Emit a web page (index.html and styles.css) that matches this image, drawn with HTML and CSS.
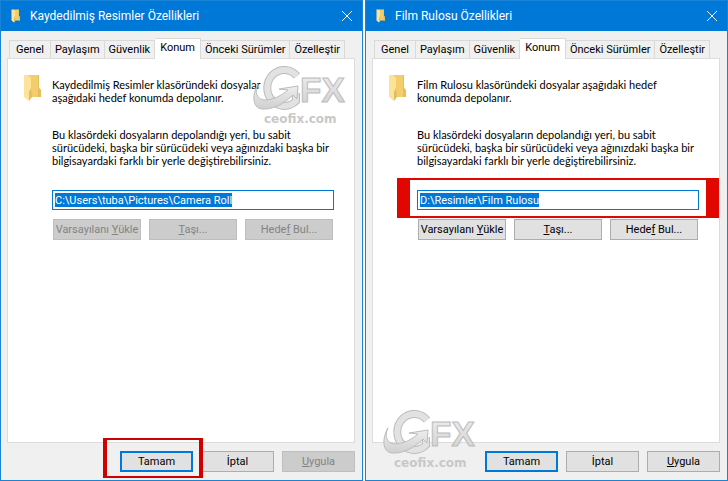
FILE: index.html
```
<!DOCTYPE html>
<html lang="tr">

<head>
  <meta charset="UTF-8" />
  <meta name="viewport" content="width=device-width, initial-scale=1.0" />
  <title>Klasör Özellikleri</title>
  <link rel="stylesheet" href="styles.css">
</head>

<body>
  <svg class="symbols" aria-hidden="true">
    <defs>
      <linearGradient id="silver" x1="0" y1="0" x2="0" y2="1">
        <stop offset="0" stop-color="#f0f0f0" />
        <stop offset="1" stop-color="#cfcfcf" />
      </linearGradient>
    </defs>
    <symbol id="folder" viewBox="0 0 20 28">
      <path d="M5 1h11v13l2 2v7H5z" fill="#f3cc6c" />
      <path d="M15 1h1v13l2 2v7h-3z" fill="#e9bd58" />
      <path d="M1 1h4l3 3v19l-2 4-5-4z" fill="#fde29a" />
      <path d="M8 14l1 9-3 4V18z" fill="#e3bd62" />
    </symbol>
    <symbol id="logo" viewBox="0 0 94 60">
      <path d="M45 10A17 18 0 1 0 44 35L44 27" fill="none" stroke="#bcbcbc" stroke-width="8" />
      <path d="M45 10A17 18 0 1 0 44 35L44 27" fill="none" stroke="#e2e2e2" stroke-width="6" />
      <path d="M6 18C2 26 5 33 12 34c10 0 18-5 24-10l-9-1 19-3-1 13-4-4C32 38 20 44 10 43 0 42 0 28 6 18z" fill="url(#silver)" stroke="#bcbcbc" />
      <text class="logo-letters" x="48" y="36">FX</text>
      <text class="logo-site" x="12" y="57">ceofix.com</text>
    </symbol>
  </svg>

  <section class="dialog">
    <header class="titlebar">
      <svg class="title-icon"><use href="#folder" /></svg>
      <h1>Kaydedilmiş Resimler Özellikleri</h1>
      <button class="close" aria-label="Kapat">
        <svg viewBox="0 0 10 10"><path d="M0 0l10 10M10 0L0 10" /></svg>
      </button>
    </header>
    <div class="content">
      <nav class="tabs">
        <button class="tab">Genel</button>
        <button class="tab">Paylaşım</button>
        <button class="tab">Güvenlik</button>
        <button class="tab active">Konum</button>
        <button class="tab">Önceki Sürümler</button>
        <button class="tab">Özelleştir</button>
      </nav>
      <div class="panel">
        <svg class="folder-icon"><use href="#folder" /></svg>
        <div class="location">
          <p class="intro">Kaydedilmiş Resimler klasöründeki dosyalar<br>aşağıdaki hedef konumda depolanır.</p>
          <p class="help">Bu klasördeki dosyaların depolandığı yeri, bu sabit<br>sürücüdeki, başka bir sürücüdeki veya ağınızdaki başka bir<br>bilgisayardaki farklı bir yerle değiştirebilirsiniz.</p>
          <div class="path-row">
            <div class="path"><input type="text" aria-label="Hedef konum" value="C:\Users\tuba\Pictures\Camera Roll"></div>
          </div>
          <div class="actions">
            <button disabled>Varsayılanı <u>Y</u>ükle</button>
            <button disabled><u>T</u>aşı...</button>
            <button disabled>Hede<u>f</u> Bul...</button>
          </div>
        </div>
      </div>
      <footer class="buttons">
        <div class="ok-wrap marked"><button class="primary">Tamam</button></div>
        <button>İptal</button>
        <button disabled><u>U</u>ygula</button>
      </footer>
    </div>
    <svg class="watermark top"><use href="#logo" /></svg>
  </section>

  <section class="dialog">
    <header class="titlebar">
      <svg class="title-icon"><use href="#folder" /></svg>
      <h1>Film Rulosu Özellikleri</h1>
      <button class="close" aria-label="Kapat">
        <svg viewBox="0 0 10 10"><path d="M0 0l10 10M10 0L0 10" /></svg>
      </button>
    </header>
    <div class="content">
      <nav class="tabs">
        <button class="tab">Genel</button>
        <button class="tab">Paylaşım</button>
        <button class="tab">Güvenlik</button>
        <button class="tab active">Konum</button>
        <button class="tab">Önceki Sürümler</button>
        <button class="tab">Özelleştir</button>
      </nav>
      <div class="panel">
        <svg class="folder-icon"><use href="#folder" /></svg>
        <div class="location">
          <p class="intro">Film Rulosu klasöründeki dosyalar aşağıdaki hedef<br>konumda depolanır.</p>
          <p class="help">Bu klasördeki dosyaların depolandığı yeri, bu sabit<br>sürücüdeki, başka bir sürücüdeki veya ağınızdaki başka bir<br>bilgisayardaki farklı bir yerle değiştirebilirsiniz.</p>
          <div class="path-row marked">
            <div class="path"><input type="text" aria-label="Hedef konum" value="D:\Resimler\Film Rulosu"></div>
          </div>
          <div class="actions">
            <button>Varsayılanı <u>Y</u>ükle</button>
            <button><u>T</u>aşı...</button>
            <button>Hede<u>f</u> Bul...</button>
          </div>
        </div>
      </div>
      <footer class="buttons">
        <div class="ok-wrap"><button class="primary">Tamam</button></div>
        <button>İptal</button>
        <button><u>U</u>ygula</button>
      </footer>
    </div>
    <svg class="watermark bottom"><use href="#logo" /></svg>
  </section>
</body>

</html>
```
FILE: styles.css
```
* {
  box-sizing: border-box;
}

body {
  margin: 0;
  min-height: 100vh;
  display: flex;
  gap: 2px;
  background: #fff;
  color: #000;
  font-family: Roboto, "Liberation Sans", Arial, sans-serif;
  font-size: 11px;
}

.symbols {
  position: absolute;
  width: 0;
  height: 0;
}

.dialog {
  position: relative;
  flex: 1;
  min-width: 0;
  display: flex;
  flex-direction: column;
  border: 1px solid #1883d7;
  background: #f0f0f0;
}

.titlebar {
  display: flex;
  align-items: center;
  height: 30px;
  padding: 0 10px 0 9px;
  background: #0078d7;
  color: #fff;
}

.titlebar h1 {
  flex: 1;
  margin: 0 0 0 8px;
  font-family: Roboto, sans-serif;
  font-size: 12px;
  font-weight: 400;
}

.title-icon {
  width: 12px;
  height: 14px;
}

.close {
  display: flex;
  padding: 0;
  border: none;
  background: none;
}

.close svg {
  width: 10px;
  height: 10px;
  overflow: visible;
  stroke: #fff;
}

.content {
  flex: 1;
  display: flex;
  flex-direction: column;
  padding: 7px 7px 8px 6px;
}

button,
input {
  font: inherit;
  color: inherit;
}

.tabs {
  display: flex;
  align-items: flex-end;
  height: 21px;
  padding: 0 10px 0 2px;
  margin-bottom: -1px;
}

.tab {
  flex: auto;
  height: 19px;
  padding: 0;
  border: 1px solid #d9d9d9;
  border-left-width: 0;
  background: #f0f0f0;
  white-space: nowrap;
}

.tab:first-child {
  padding: 0 2px;
  border-left-width: 1px;
}

.tab.active {
  height: 21px;
  padding: 0 1px 3px;
  border-bottom: none;
  background: #fff;
  z-index: 1;
}

.panel {
  flex: 1;
  display: flex;
  gap: 9px;
  padding: 15px 20px 0 15px;
  border: 1px solid #dcdcdc;
  background: #fff;
}

.folder-icon {
  flex: none;
  width: 20px;
  height: 28px;
}

.location {
  flex: 1;
  min-width: 0;
}

.location p {
  margin: 0;
  font-family: Lato, "Liberation Sans", sans-serif;
  line-height: 13px;
  white-space: nowrap;
}

.location .intro {
  padding-top: 4px;
}

.location .help {
  padding-top: 24px;
}

.path-row {
  margin-top: 11px;
  padding: 12px 0 8px;
}

/* red highlight, wider than the text column */
.path-row.marked {
  margin-left: -20px;
  margin-right: -20px;
  padding: 10px 7px 6px;
  border: solid #e10600;
  border-width: 2px 13px;
}

.path {
  height: 20px;
  padding: 2px;
  border: 1px solid #0078d7;
  background: #fff;
}

/* the whole path is selected, so the input hugs its text */
.path input {
  display: block;
  field-sizing: content;
  max-width: 100%;
  height: 14px;
  padding: 0;
  border: none;
  background: #0078d7;
  color: #fff;
  outline: none;
}

.actions {
  display: flex;
  gap: 8px;
  padding: 1px 1px 0;
}

.actions button,
.buttons button {
  flex: 1;
  height: 21px;
  padding: 0;
  border: 1px solid #adadad;
  background: #e1e1e1;
  white-space: nowrap;
}

.actions button:disabled,
.buttons button:disabled {
  border-color: #bfbfbf;
  background: #ccc;
  color: #838383;
}

.buttons {
  display: flex;
  justify-content: flex-end;
  gap: 8px;
  padding-top: 8px;
}

.buttons button {
  flex: none;
  width: 73px;
}

.buttons .primary {
  border: 2px solid #0078d7;
}

.ok-wrap.marked {
  position: relative;
  margin: -13px -10px -6px 0;
  padding: 11px 6px 4px 13px;
  border: solid #d00000;
  border-width: 2px 4px;
}

.watermark {
  position: absolute;
  width: 94px;
  height: 60px;
  pointer-events: none;
}

.watermark.top {
  top: 65px;
  right: 16px;
}

.watermark.bottom {
  left: 16px;
  bottom: 10px;
}

.logo-letters {
  font: bold 35px "Liberation Sans", Arial, sans-serif;
  fill: url(#silver);
  stroke: #bcbcbc;
}

.logo-site {
  font: bold 12px "DejaVu Sans", Verdana, sans-serif;
  fill: #c8c8c8;
}
```
